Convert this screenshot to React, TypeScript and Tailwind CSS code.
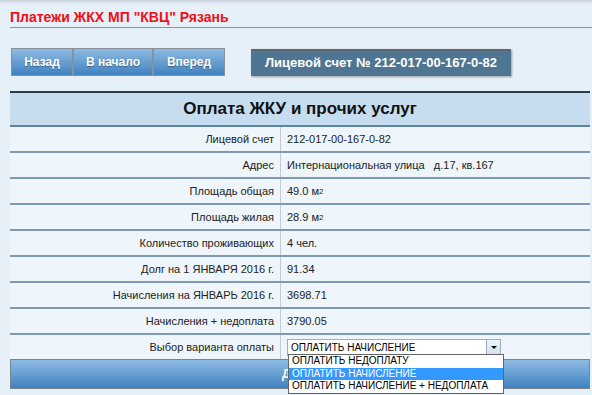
import React from "react";

const rows: [string, React.ReactNode][] = [
  ["Лицевой счет", "212-017-00-167-0-82"],
  ["Адрес", <span>Интернациональная улица&nbsp;&nbsp; д.17, кв.167</span>],
  ["Площадь общая", <span>49.0 м<sup className="text-[8px] relative -top-[1px]">2</sup></span>],
  ["Площадь жилая", <span>28.9 м<sup className="text-[8px] relative -top-[1px]">2</sup></span>],
  ["Количество проживающих", "4 чел."],
  ["Долг на 1 ЯНВАРЯ 2016 г.", "91.34"],
  ["Начисления на ЯНВАРЬ 2016 г.", "3698.71"],
  ["Начисления + недоплата", "3790.05"],
];

function NavBtn({ children, w }: { children: React.ReactNode; w: string }) {
  return (
    <div
      className={`${w} h-[28px] flex items-center justify-center border border-[#8a9098] bg-gradient-to-b from-[#8dbbe3] to-[#3f82c0] text-white font-bold text-[12px] [text-shadow:0_1px_1px_rgba(0,0,0,0.35)]`}
    >
      {children}
    </div>
  );
}

export default function App() {
  return (
    <div
      className="w-[592px] h-[395px] overflow-hidden bg-[#e6f0f8] relative"
      style={{ fontFamily: '"Liberation Sans", Arial, sans-serif' }}
    >
      <div className="h-[4px] bg-gradient-to-b from-[#c9d2da] to-[#e6f0f8]" />
      <div className="pl-[10px] pt-[5px]">
        <div className="text-[#f00f14] font-bold text-[14px] leading-[17px]">Платежи ЖКХ МП "КВЦ" Рязань</div>
        <div className="h-[1px] bg-[#f06a6a] mt-[1px]" />
      </div>
      <div className="flex items-center pl-[11px] mt-[20px] h-[28px]">
        <NavBtn w="w-[62px]">Назад</NavBtn>
        <NavBtn w="w-[80px]">В начало</NavBtn>
        <NavBtn w="w-[72px]">Вперед</NavBtn>
        <div className="ml-[26px] w-[260px] h-[27px] bg-[#4e7592] text-white font-bold text-[13px] flex items-center justify-center shadow-[1px_1px_2px_rgba(0,0,0,0.35)] border-t-2 border-[#5d6872]">
          Лицевой счет № 212-017-00-167-0-82
        </div>
      </div>
      <div className="ml-[10px] mt-[15px] w-[580px] bg-[#eef5fb]">
        <div className="h-[36px] border-t-2 border-[#2f3a44] border-b-2 border-b-[#5f84a4] bg-[#c6ddef] flex items-center justify-center font-bold text-[17px] text-[#111]">
          Оплата ЖКУ и прочих услуг
        </div>
        {rows.map(([l, v], i) => (
          <div key={i} className="h-[26px] flex border-b-2 border-[#7e9ab3] text-[11px] text-[#222]">
            <div className="w-[271px] pr-[6px] text-right flex items-center justify-end border-r border-[#c3ccd4]">{l}</div>
            <div className="pl-[6px] flex items-center">{v}</div>
          </div>
        ))}
        <div className="h-[24px] flex text-[11px] text-[#222]">
          <div className="w-[271px] pr-[6px] flex items-center justify-end border-r border-[#c3ccd4]">Выбор варианта оплаты</div>
          <div className="pl-[6px] flex items-center relative">
            <div className="w-[214px] h-[17px] bg-white border border-[#a5acb5] flex items-center pl-[3px] text-[10px] whitespace-nowrap text-black relative">
              ОПЛАТИТЬ НАЧИСЛЕНИЕ
              <div className="absolute right-0 top-0 w-[14px] h-[15px] bg-gradient-to-b from-[#eef5fc] to-[#cfe1f3] border-l border-[#a5acb5] flex items-center justify-center">
                <div className="w-0 h-0 border-l-[3px] border-r-[3px] border-t-[3px] border-l-transparent border-r-transparent border-t-black" />
              </div>
            </div>
          </div>
        </div>
        <div className="h-[30px] bg-gradient-to-b from-[#8dbbe3] to-[#3f82c0] border border-[#7a8590] flex items-center justify-center text-white font-bold text-[12px]">
          Далее
        </div>
      </div>
      <div className="absolute left-[288px] top-[354px] w-[216px] bg-white border border-[#646464] text-black text-[10px] whitespace-nowrap">
        <div className="h-[12.5px] leading-[12px] pl-[3px]">ОПЛАТИТЬ НЕДОПЛАТУ</div>
        <div className="h-[12.5px] leading-[12px] pl-[3px] bg-[#3399ff] text-white">ОПЛАТИТЬ НАЧИСЛЕНИЕ</div>
        <div className="h-[12.5px] leading-[12px] pl-[3px]">ОПЛАТИТЬ НАЧИСЛЕНИЕ + НЕДОПЛАТА</div>
      </div>
    </div>
  );
}
